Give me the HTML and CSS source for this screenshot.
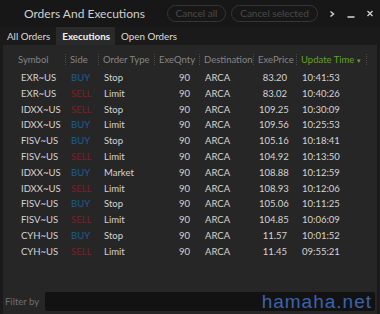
FILE: index.html
```html
<!DOCTYPE html>
<html lang="en">
<head>
    <meta charset="UTF-8">
    <title>Orders And Executions</title>
    <link rel="stylesheet" href="styles.css">
</head>
<body>
    <div class="window">
        <div class="titlebar">
            <div class="title">Orders And Executions</div>
            <button class="pill-btn pill-all">Cancel all</button>
            <button class="pill-btn pill-selected">Cancel selected</button>
            <div class="win-controls">
                <svg class="ctl" width="8" height="10" viewBox="0 0 8 10"><path d="M2.5 2.5 L5.5 5 L2.5 7.5" fill="none" stroke="#cfcfcf" stroke-width="1.5"/></svg>
                <svg class="ctl" width="8" height="10" viewBox="0 0 8 10"><path d="M0.5 8 H7.5" stroke="#cfcfcf" stroke-width="1.6"/></svg>
                <svg class="ctl" width="8" height="10" viewBox="0 0 8 10"><path d="M1.5 2 L6.5 7 M6.5 2 L1.5 7" stroke="#cfcfcf" stroke-width="1.3"/></svg>
            </div>
        </div>

        <div class="tabs">
            <div class="tab">All Orders</div>
            <div class="tab active">Executions</div>
            <div class="tab">Open Orders</div>
        </div>

        <div class="panel">
            <div class="grid header">
                <div class="hcell first">Symbol</div>
                <div class="hcell">Side</div>
                <div class="hcell">Order Type</div>
                <div class="hcell">ExeQnty</div>
                <div class="hcell">Destination</div>
                <div class="hcell">ExePrice</div>
                <div class="hcell sorted">Update Time <span class="arrow">&#9662;</span></div>
                <div class="hcell last"></div>
            </div>
            <div id="rows"></div>
        </div>

        <div class="filter">
            <span class="filter-label">Filter by</span>
            <div class="filter-input"></div>
        </div>

        <div class="watermark">hamaha.net</div>
    </div>

    <script>
        const executions = [
            ['EXR~US', 'BUY', 'Stop', '90', 'ARCA', '83.20', '10:41:53'],
            ['EXR~US', 'SELL', 'Limit', '90', 'ARCA', '83.02', '10:40:26'],
            ['IDXX~US', 'SELL', 'Stop', '90', 'ARCA', '109.25', '10:30:09'],
            ['IDXX~US', 'BUY', 'Limit', '90', 'ARCA', '109.56', '10:25:53'],
            ['FISV~US', 'BUY', 'Stop', '90', 'ARCA', '105.16', '10:18:41'],
            ['FISV~US', 'SELL', 'Limit', '90', 'ARCA', '104.92', '10:13:50'],
            ['IDXX~US', 'BUY', 'Market', '90', 'ARCA', '108.88', '10:12:59'],
            ['IDXX~US', 'SELL', 'Limit', '90', 'ARCA', '108.93', '10:12:06'],
            ['FISV~US', 'BUY', 'Stop', '90', 'ARCA', '105.06', '10:11:25'],
            ['FISV~US', 'SELL', 'Limit', '90', 'ARCA', '104.85', '10:06:09'],
            ['CYH~US', 'BUY', 'Stop', '90', 'ARCA', '11.57', '10:01:52'],
            ['CYH~US', 'SELL', 'Limit', '90', 'ARCA', '11.45', '09:55:21']
        ];

        const rows = document.getElementById('rows');
        executions.forEach(function(row) {
            const line = document.createElement('div');
            line.className = 'grid row';
            row.forEach(function(value, i) {
                const cell = document.createElement('div');
                cell.className = 'cell';
                if (i === 0) cell.classList.add('first');
                if (i === 1) cell.classList.add(value === 'BUY' ? 'buy' : 'sell');
                if (i === 3 || i === 5) cell.classList.add('num');
                cell.textContent = value;
                line.appendChild(cell);
            });
            rows.appendChild(line);
        });
    </script>
</body>
</html>
```

FILE: styles.css
```css
body {
    margin: 0;
    background-color: #1a1a1a;
    font-family: Lato, 'Open Sans', sans-serif;
    font-size: 9.5px;
    color: #d4d4d4;
}
.window {
    position: relative;
    width: 380px;
    height: 314px;
    display: flex;
    flex-direction: column;
    background-color: #1a1a1a;
    overflow: hidden;
}
.titlebar {
    height: 27px;
    flex-shrink: 0;
    display: flex;
    align-items: center;
    background-color: #171717;
}
.title {
    margin-left: 24px;
    font-size: 12px;
    color: #cfcfcf;
    width: 143px;
    white-space: nowrap;
}
.pill-btn {
    height: 17px;
    padding: 0;
    border: 1px solid #353535;
    border-radius: 9px;
    background: transparent;
    color: #4a4a4a;
    font-family: inherit;
    font-size: 10px;
    line-height: 15px;
}
.pill-all {
    width: 59px;
}
.pill-selected {
    width: 87px;
    margin-left: 5px;
}
.win-controls {
    display: flex;
    align-items: center;
    gap: 11px;
    margin-left: 10px;
}
.tabs {
    height: 18px;
    flex-shrink: 0;
    display: flex;
    align-items: flex-end;
    padding-left: 1px;
    background-color: #1a1a1a;
}
.tab {
    height: 18px;
    line-height: 19px;
    padding: 0 6px;
    font-size: 9.8px;
    color: #dadada;
}
.tab.active {
    padding: 0 5px 0 6px;
    background-color: #2a2a2a;
    color: #f2f2f2;
    font-weight: bold;
}
.panel {
    box-sizing: border-box;
    height: 243px;
    flex-shrink: 0;
    margin: 0 3px;
    padding-top: 6px;
    background-color: #262626;
}
.grid {
    display: grid;
    grid-template-columns: 62px 33px 56px 45px 54px 43px 70px 11px;
}
.header {
    height: 17px;
    align-items: center;
    color: #858585;
}
.hcell {
    padding-left: 4px;
    border-left: 1px dotted #4a4a4a;
    height: 11px;
    line-height: 11px;
    white-space: nowrap;
}
.hcell.first {
    padding-left: 15px;
    border-left: none;
}
.hcell.sorted {
    color: #63a51d;
}
.arrow {
    font-size: 7px;
}
.row {
    height: 15.8px;
    line-height: 15.8px;
}
.row:first-child {
    margin-top: 2px;
}
.cell {
    padding-left: 6px;
    white-space: nowrap;
}
.cell.first {
    padding-left: 18px;
}
.cell.num {
    text-align: right;
    padding-right: 9px;
}
.buy {
    color: #1d5d93;
}
.sell {
    color: #8a1a22;
}
.filter {
    height: 26px;
    flex-shrink: 0;
    display: flex;
    align-items: center;
    padding: 0 2px;
    margin: 0 3px;
    background-color: #262626;
}
.filter-label {
    color: #6f6f6f;
    width: 40px;
}
.filter-input {
    flex: 1;
    height: 19px;
    margin-top: 1px;
    background-color: #121212;
    border-radius: 2px;
}
.watermark {
    position: absolute;
    right: 8px;
    bottom: 1px;
    font-family: 'Liberation Sans', Arial, sans-serif;
    font-size: 19px;
    letter-spacing: 1px;
    color: #3c63ad;
}
```
